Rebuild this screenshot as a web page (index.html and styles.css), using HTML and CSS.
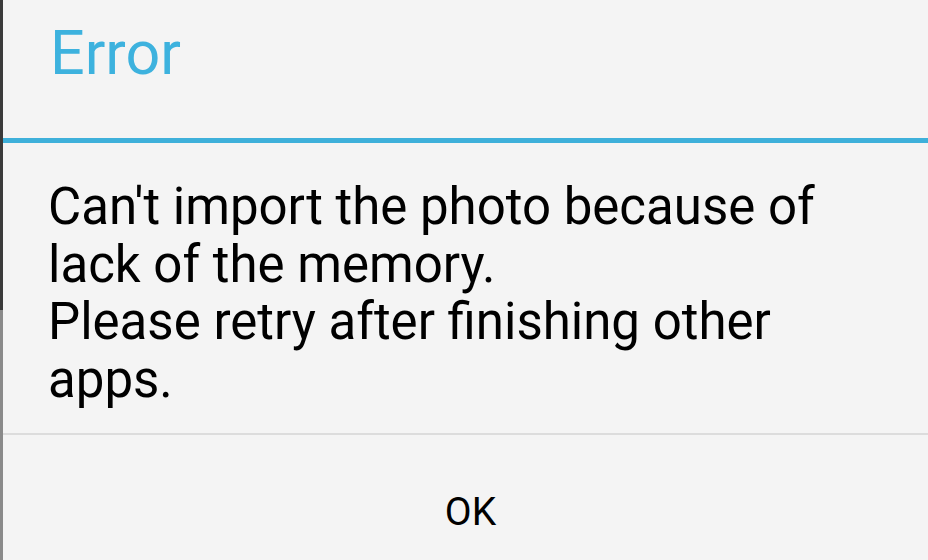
FILE: index.html
```html
<!DOCTYPE html>
<html lang="en">
<head>
  <meta charset="UTF-8">
  <title>Error</title>
  <link rel="stylesheet" href="styles.css">
</head>
<body>
  <div class="dialog">
    <div class="edge"></div>
    <div class="panel">
      <div class="title-bar">
        <h1 class="title">Error</h1>
      </div>
      <div class="title-line"></div>
      <div class="message">
        <p>Can't import the photo because of lack of the memory.<br>Please retry after finishing other apps.</p>
      </div>
      <div class="buttons">
        <button class="button-ok">OK</button>
      </div>
    </div>
  </div>
</body>
</html>
```

FILE: styles.css
```css
html, body {
  margin: 0;
  padding: 0;
  height: 100%;
}
body {
  font-family: Roboto, 'Noto Sans', sans-serif;
  background-color: #f4f4f4;
  color: #000;
}
.dialog {
  display: flex;
  height: 560px;
  overflow: hidden;
}
.edge {
  width: 3px;
  flex-shrink: 0;
  background: linear-gradient(#3a3a3a 0, #3a3a3a 310px, #8a8a8a 310px);
}
.panel {
  flex: 1;
  display: flex;
  flex-direction: column;
}
.title-bar {
  height: 138px;
  padding-left: 47px;
  box-sizing: border-box;
}
.title {
  margin: 0;
  padding-top: 15px;
  font-size: 61px;
  font-weight: normal;
  line-height: 76px;
  color: #3db2de;
}
.title-line {
  height: 5px;
  background-color: #3eb0da;
}
.message {
  height: 292px;
  padding: 0 40px 0 45px;
  box-sizing: border-box;
  border-bottom: 2px solid #dcdcdc;
}
.message p {
  margin: 0;
  padding-top: 35px;
  font-size: 51px;
  line-height: 57.7px;
  color: #000;
}
.buttons {
  flex: 1;
  display: flex;
  justify-content: center;
}
.button-ok {
  background: none;
  border: none;
  margin: 51px 0 0 10px;
  padding: 0;
  height: 52px;
  font-family: Roboto, 'Noto Sans', sans-serif;
  font-size: 39px;
  color: #000;
}
```
